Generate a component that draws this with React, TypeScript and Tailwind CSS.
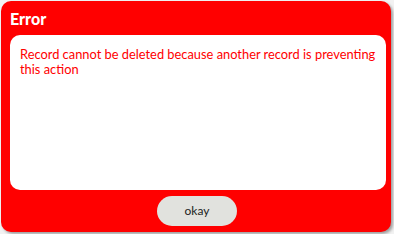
export default function App() {
  return (
    <div className="h-[234px] w-[394px] bg-[#f2f2f2] pl-px pt-px" style={{ fontFamily: 'Lato, "Open Sans", sans-serif' }}>
      <div className="flex h-[231px] w-[390px] flex-col rounded-[10px] bg-[#ff0000] pl-[9px] pr-[5px] shadow-[2px_2px_3px_rgba(0,0,0,0.35)]">
        <div className="flex h-[34px] items-center pt-[1px] text-[16px] font-black leading-none text-white">Error</div>
        <div className="h-[155px] rounded-[10px] bg-white pl-[10px] pr-[4px] pt-[12px] text-[12.85px] leading-[15px] text-[#ff0000]">
          Record cannot be deleted because another record is preventing this action
        </div>
        <div className="flex flex-1 items-start justify-center pr-[2px] pt-[6px]">
          <button className="h-[30px] w-[80px] rounded-full bg-[#e1e2de] text-[12px] text-[#222]">okay</button>
        </div>
      </div>
    </div>
  )
}
